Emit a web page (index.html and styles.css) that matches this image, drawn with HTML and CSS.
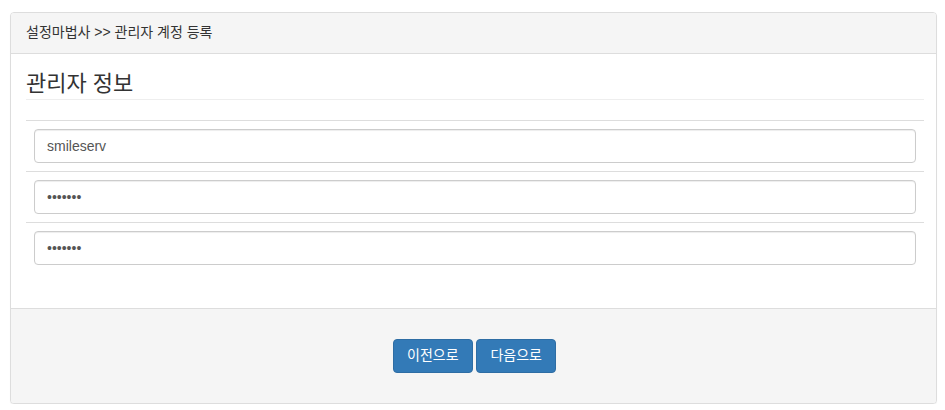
FILE: index.html
```html
<!DOCTYPE html>
<html lang="ko">
<head>
  <meta charset="UTF-8">
  <title>설정마법사 - 관리자 계정 등록</title>
  <link rel="stylesheet" href="styles.css">
</head>
<body>
  <div class="wrap">
    <div class="panel">
      <div class="panel-heading">설정마법사 &gt;&gt; 관리자 계정 등록</div>

      <div class="panel-body">
        <h3 class="page-header">관리자 정보</h3>
        <table class="form-table">
          <tr><td><input class="form-control" type="text" value="smileserv"></td></tr>
          <tr><td><input class="form-control" type="password" value="1234567"></td></tr>
          <tr><td><input class="form-control" type="password" value="1234567"></td></tr>
        </table>
      </div>

      <div class="panel-footer">
        <button class="btn btn-primary">이전으로</button>
        <button class="btn btn-primary">다음으로</button>
      </div>
    </div>
  </div>
</body>
</html>
```

FILE: styles.css
```css
body {
  margin: 0;
  font-family: 'Liberation Sans', 'Noto Sans CJK KR', sans-serif;
  font-size: 14px;
  line-height: 1.42857;
  color: #333;
  background: #fff;
}
.wrap {
  padding: 12px 8px 0 10px;
}
.panel {
  border: 1px solid #ddd;
  border-radius: 4px;
  box-shadow: 0 1px 1px rgba(0, 0, 0, 0.05);
  background: #fff;
}
.panel-heading {
  padding: 10px 15px;
  background-color: #f5f5f5;
  border-bottom: 1px solid #ddd;
  border-radius: 3px 3px 0 0;
}
.panel-body {
  padding: 15px 12px 15px 15px;
}
.page-header {
  margin: 0 0 20px;
  padding: 4px 0;
  font-size: 22px;
  font-weight: normal;
  line-height: 22px;
  border-bottom: 1px solid #eee;
}
.form-table {
  width: 100%;
  border-collapse: collapse;
  margin-bottom: 20px;
}
.form-table td {
  padding: 8px;
  border-top: 1px solid #ddd;
}
.form-control {
  display: block;
  box-sizing: border-box;
  width: 100%;
  height: 34px;
  padding: 6px 12px;
  font-family: inherit;
  font-size: 14px;
  color: #555;
  background: #fff;
  border: 1px solid #ccc;
  border-radius: 4px;
  box-shadow: inset 0 1px 1px rgba(0, 0, 0, 0.075);
}
.panel-footer {
  padding: 30px 13px 30px 15px;
  text-align: center;
  background-color: #f5f5f5;
  border-top: 1px solid #ddd;
  border-radius: 0 0 3px 3px;
}
.btn {
  display: inline-block;
  height: 34px;
  padding: 6px 13px;
  font-family: inherit;
  font-size: 14px;
  line-height: 1.42857;
  border: 1px solid transparent;
  border-radius: 4px;
  cursor: pointer;
}
.btn-primary {
  color: #fff;
  background-color: #337ab7;
  border-color: #2e6da4;
}
```
